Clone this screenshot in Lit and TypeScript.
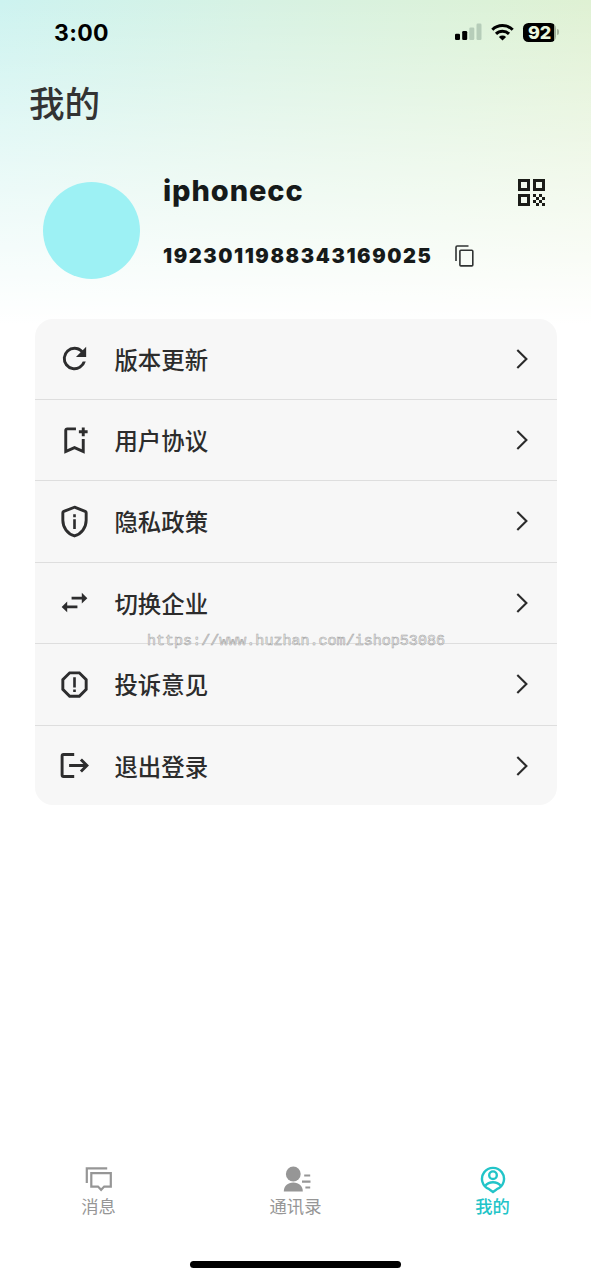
import { LitElement, html, css, svg } from "lit";
import { customElement } from "lit/decorators.js";

const rowIcons = {
  refresh: svg`<path d="M17.65 6.35A7.96 7.96 0 0 0 12 4a8 8 0 1 0 7.73 10h-2.08A6 6 0 1 1 12 6c1.66 0 3.14.69 4.22 1.78L13 11h7V4z"/>`,
  bookmark: svg`<path d="M17 11v6.97l-5-2.14-5 2.14V5h6V3H7c-1.1 0-2 .9-2 2v16l7-3 7 3V11zM21 7h-2v2h-2V7h-2V5h2V3h2v2h2z"/>`,
  shield: svg`<path class="line" d="M12 2.2 19.3 5Q20 5.3 20 6v5.2c0 5-3.2 9.2-8 10.7-4.8-1.5-8-5.7-8-10.7V6q0-.7.7-1z"/><path d="M11.1 7.1h1.8v1.9h-1.8zM11.1 10.4h1.8v6.8h-1.8z"/>`,
  swap: svg`<path d="M6.99 11.3 3.2 15l3.79 3.7v-2.8H14v-1.9H6.99zM20.8 9l-3.79-3.7v2.8H10V10h7.01v2.7z"/>`,
  report: svg`<path d="M15.73 3H8.27L3 8.27v7.46L8.27 21h7.46L21 15.73V8.27zM19 14.9 14.9 19H9.1L5 14.9V9.1L9.1 5h5.8L19 9.1zM11.1 7h1.8v7h-1.8zM11.1 15.4h1.8v1.8h-1.8z"/>`,
  logout: svg`<path class="line" d="M11.8 4.5H4.5q-1 0-1 1v13q0 1 1 1h7.3M8.3 12h12M16.4 7.9l4.1 4.1-4.1 4.1"/>`,
};

const rows = [
  { icon: rowIcons.refresh, label: "版本更新" },
  { icon: rowIcons.bookmark, label: "用户协议" },
  { icon: rowIcons.shield, label: "隐私政策" },
  { icon: rowIcons.swap, label: "切换企业" },
  { icon: rowIcons.report, label: "投诉意见" },
  { icon: rowIcons.logout, label: "退出登录" },
];

@customElement("status-bar")
class StatusBar extends LitElement {
  static styles = css`
    :host { display: flex; height: 64px; justify-content: space-between; align-items: center; box-sizing: border-box; padding: 0 32px 0 54px; font-family: Inter, sans-serif; color: #000; }
    .time { font-size: 23px; font-weight: 700; line-height: 28px; letter-spacing: 0.35px; padding-top: 1px; }
    .icons { display: flex; align-items: center; gap: 9px; }
    svg { display: block; }
    .faint { fill: #b6cdb9; }
    .battery { display: flex; align-items: center; gap: 1px; }
    .level { width: 33px; height: 19px; box-sizing: border-box; border-radius: 5.5px; background: linear-gradient(90deg, #000 31.5px, #9dab96 31.5px); color: #eaf7df; font-size: 18px; font-weight: 800; line-height: 19px; text-align: center; letter-spacing: -0.2px; }
    .nub { width: 2px; height: 6px; border-radius: 0 2px 2px 0; background: #a9b8a0; }
  `;
  render() {
    return html`
      <div class="time">3:00</div>
      <div class="icons">
        <svg width="27" height="18" viewBox="0 0 27 18">
          <rect x="0" y="10.8" width="5" height="6.2" rx="1.3"/>
          <rect x="7.2" y="8" width="5" height="9" rx="1.3"/>
          <rect class="faint" x="14.3" y="4.4" width="5" height="12.6" rx="1.3"/>
          <rect class="faint" x="21.5" y="0.6" width="5" height="16.4" rx="1.3"/>
        </svg>
        <svg width="23" height="18" viewBox="0 0 23 18">
          <g fill="none" stroke="#000" stroke-width="3">
            <path d="M1.3 6.7a14.6 14.6 0 0 1 20.4 0"/>
            <path d="M5 10.9a9.2 9.2 0 0 1 13 0"/>
          </g>
          <path d="M11.5 17.6 7.9 14a5.1 5.1 0 0 1 7.2 0z"/>
        </svg>
        <div class="battery"><div class="level">92</div><div class="nub"></div></div>
      </div>`;
  }
}

@customElement("profile-header")
class ProfileHeader extends LitElement {
  static styles = css`
    :host { display: flex; height: 143px; padding: 0 46px 0 43px; color: #161a1a; font-family: Inter, sans-serif; }
    .avatar { width: 97px; height: 97px; margin-top: 6px; border-radius: 50%; background: #9df1f4; }
    .info { flex: 1; margin-left: 23px; }
    .name { margin-top: -3px; font-size: 29px; line-height: 36px; font-weight: 850; letter-spacing: 0.9px; }
    .account { display: flex; align-items: center; margin-top: 34px; height: 26px; }
    .number { width: 268px; font-size: 20px; line-height: 26px; font-weight: 900; letter-spacing: 1.6px; white-space: nowrap; }
    .copy { margin-left: 24px; }
    .qr { margin-top: 3px; }
    svg { display: block; }
  `;
  render() {
    return html`
      <div class="avatar"></div>
      <div class="info">
        <div class="name">iphonecc</div>
        <div class="account">
          <span class="number">1923011988343169025</span>
          <svg class="copy" width="19" height="22" viewBox="0 0 19 22" fill="none" stroke="#303333" stroke-width="1.6">
            <path d="M1 16.1V2.2Q1 1 2.2 1h11.3"/><rect x="4.9" y="5.2" width="12.9" height="15.7" rx="1"/>
          </svg>
        </div>
      </div>
      <svg class="qr" width="27" height="27" viewBox="0 0 18 18" fill="#1b1c18">
        <path fill-rule="evenodd" d="M0 0h8v8H0zM2 2v4h4V2zM10 0h8v8h-8zM12 2v4h4V2zM0 10h8v8H0zM2 12v4h4v-4z"/>
        <path d="M10 10h2v2h-2zM14 10h2v2h-2zM12 12h2v2h-2zM16 12h2v2h-2zM10 14h2v2h-2zM14 14h2v2h-2zM12 16h2v2h-2zM16 16h2v2h-2z"/>
      </svg>`;
  }
}

@customElement("settings-list")
class SettingsList extends LitElement {
  static styles = css`
    :host { display: block; margin: 0 34.5px; border-radius: 18px; background: #f7f7f7; overflow: hidden; }
    .row { display: flex; align-items: center; box-sizing: border-box; height: 81.4px; padding: 0 28.6px 2px 22.2px; background: linear-gradient(#dedede, #dedede) bottom / 100% 1.4px no-repeat; }
    .row:last-child { height: 79.4px; padding-bottom: 0; background: none; }
    .icon { width: 35px; height: 35px; fill: #2d2d2e; }
    .line { fill: none; stroke: #2d2d2e; stroke-width: 2; }
    .label { flex: 1; margin-left: 22.8px; color: #2c2c2c; font: 500 23.4px/32px "Noto Sans CJK SC", sans-serif; }
    .chevron { fill: none; stroke: #2b2b2b; stroke-width: 2.1; }
  `;
  render() {
    return html`${rows.map((r) => html`
      <div class="row">
        <svg class="icon" viewBox="0 0 24 24">${r.icon}</svg>
        <span class="label">${r.label}</span>
        <svg class="chevron" width="12" height="20" viewBox="0 0 12 20"><path d="M1.3 1.1 10.4 10l-9.1 8.9"/></svg>
      </div>`)}`;
  }
}

@customElement("tab-bar")
class TabBar extends LitElement {
  static styles = css`
    :host { display: grid; grid-template-columns: repeat(3, 1fr); color: #969696; }
    .tab { display: flex; flex-direction: column; align-items: center; font: 400 17.3px/24px "Noto Sans CJK SC", sans-serif; }
    .active { color: #22c4c8; font-weight: 500; }
    svg { display: block; margin-bottom: -1px; }
  `;
  render() {
    return html`
      <div class="tab">
        <svg width="28" height="30" viewBox="0 0 28 30" fill="none" stroke="currentColor" stroke-width="2.2">
          <path d="M1.8 18V3.4h20.4"/><path d="M6.3 8.2h19.5v13.4h-6.6l-3.1 3.2-3.1-3.2H6.3z"/>
        </svg>
        <span>消息</span>
      </div>
      <div class="tab">
        <svg width="30" height="30" viewBox="0 0 30 30" fill="currentColor">
          <ellipse cx="12.3" cy="9" rx="7.4" ry="7.5"/>
          <path d="M2.8 26.6c0-5.4 3.8-9 9.5-9s9.5 3.6 9.5 9z"/>
          <path d="M23.2 9.4h6v2.2h-6zM21 15.5h8.5v2.2H21zM24.4 21.4h4.8v2.2h-4.8z"/>
        </svg>
        <span>通讯录</span>
      </div>
      <div class="tab active">
        <svg width="26" height="30" viewBox="0 0 26 30" fill="none" stroke="currentColor" stroke-width="2.4">
          <path d="M9.2 24.2A11 11 0 1 1 16.8 24.2L13 27z"/>
          <circle cx="13" cy="10.2" r="3.8"/><path d="M5.2 20.7Q8.2 17.3 13 17.3T20.8 20.7"/>
        </svg>
        <span>我的</span>
      </div>`;
  }
}

@customElement("app-root")
class AppRoot extends LitElement {
  static styles = css`
    :host {
      display: flex; flex-direction: column; position: relative; height: 1280px; overflow: hidden;
      background: linear-gradient(180deg, rgba(255,255,255,0) 0, rgba(255,255,255,0.54) 165px, #fff 325px),
        linear-gradient(100deg, #cdf3f0 0, #d7f2e3 260px, #dcf2d8 480px, #e2f0cf 680px);
    }
    .title { height: 112px; box-sizing: border-box; padding: 12px 0 0 29px; color: #333; font: 500 35.6px/52px "Noto Sans CJK SC", sans-serif; }
    tab-bar { margin-top: auto; }
    .home { width: 211px; height: 7px; margin: 43px auto 12px; border-radius: 4px; background: #000; }
    .watermark { position: absolute; left: 147px; top: 631px; font: 15.05px/20px "Liberation Mono", monospace; color: #f2f2f2; -webkit-text-stroke: 0.55px #a4a4a4; white-space: pre; }
  `;
  render() {
    return html`
      <status-bar></status-bar>
      <div class="title">我的</div>
      <profile-header></profile-header>
      <settings-list></settings-list>
      <tab-bar></tab-bar>
      <div class="home"></div>
      <div class="watermark">https://www.huzhan.com/ishop53086</div>`;
  }
}
